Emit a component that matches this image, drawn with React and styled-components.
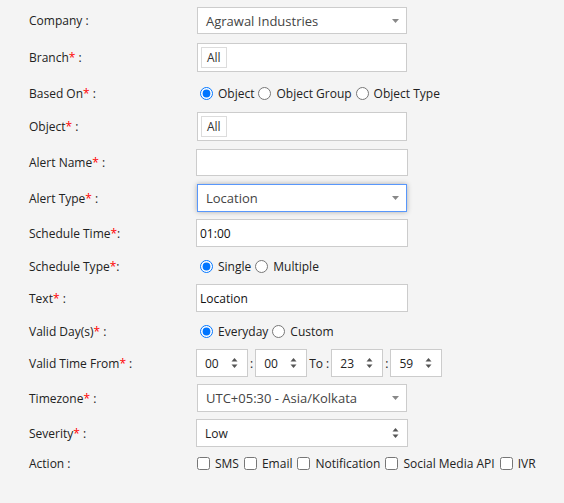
import React from 'react';
import styled, { createGlobalStyle } from 'styled-components';

const Global = createGlobalStyle`
  html, body { margin: 0; padding: 0; background: #f4f4f4; }
  body {
    font-family: "Open Sans", "Noto Sans", sans-serif;
    font-size: 12px;
    color: #222;
  }
  * { box-sizing: border-box; }
`;

const Form = styled.div`
  display: flex;
  flex-direction: column;
  padding: 7px 0 40px 29px;
  background: #f4f4f4;
`;

const Row = styled.div`
  display: flex;
  align-items: center;
  height: ${p => p.$h}px;
  margin-top: ${p => p.$mt || 0}px;
`;

const Label = styled.div`
  width: 167px;
  flex-shrink: 0;
  font-size: 12px;
  color: #222;
  white-space: nowrap;
`;

const Req = styled.span`
  color: #ff0000;
`;

const Chosen = styled.div`
  position: relative;
  margin-left: 1px;
  width: 210px;
  height: 100%;
  display: flex;
  align-items: center;
  padding-left: 8px;
  background: #fff;
  border: 1px solid ${p => (p.$focus ? '#5897fb' : '#cccccc')};
  box-shadow: ${p => (p.$focus ? '0 0 5px rgba(0,0,0,0.3)' : 'none')};
  color: #444;
  font-size: 13px;
`;

const ArrowWrap = styled.span`
  position: absolute;
  right: ${p => p.$r}px;
  top: 50%;
  transform: translateY(-50%);
  display: flex;
`;

const ChosenMulti = styled.div`
  margin-left: 1px;
  width: 210px;
  height: 100%;
  display: flex;
  align-items: flex-start;
  padding: 3px 0 0 3px;
  background: #fff;
  border: 1px solid #cccccc;
`;

const Tag = styled.span`
  display: inline-flex;
  align-items: center;
  height: 21px;
  padding: 0 5px;
  border: 1px solid #dcdcdc;
  background: #fff;
  color: #333;
  font-size: 12px;
`;

const TextInput = styled.input`
  width: 212px;
  height: 100%;
  border: 1px solid #cccccc;
  background: #fff;
  padding: 0 3px;
  font-family: "Open Sans", "Noto Sans", sans-serif;
  font-size: 12px;
  color: #111;
  outline: none;
`;

const NativeSelect = styled.div`
  position: relative;
  width: ${p => p.$w}px;
  height: 100%;
  display: flex;
  align-items: center;
  padding-left: 8px;
  background: #fff;
  border: 1px solid #cccccc;
  color: #222;
  font-size: 12px;
  flex-shrink: 0;
`;

const Options = styled.div`
  display: flex;
  align-items: center;
  margin-left: ${p => p.$ml || 0}px;
`;

const OptionLabel = styled.label`
  display: inline-flex;
  align-items: center;
  color: #222;
  font-size: 12px;
  margin-right: ${p => p.$mr || 0}px;
`;

const Radio = styled.input.attrs({ type: 'radio' })`
  width: 13px;
  height: 13px;
  margin: 0 5px 0 4px;
`;

const Check = styled.input.attrs({ type: 'checkbox' })`
  width: 13px;
  height: 13px;
  margin: 0 5px 0 0;
`;

const Sep = styled.span`
  margin: 0 2px;
  color: #222;
  font-size: 12px;
`;

const Caret = () => (
  <svg width="7" height="4" viewBox="0 0 7 4">
    <path d="M0 0 H7 L3.5 4 Z" fill="#888" />
  </svg>
);

const UpDown = () => (
  <svg width="7" height="11" viewBox="0 0 7 11">
    <path d="M0.5 4 L3.5 0.5 L6.5 4 Z" fill="#555" />
    <path d="M0.5 7 L3.5 10.5 L6.5 7 Z" fill="#555" />
  </svg>
);

const ChosenSelect = ({ value, focus }) => (
  <Chosen $focus={focus}>
    {value}
    <ArrowWrap $r={7}>
      <Caret />
    </ArrowWrap>
  </Chosen>
);

const Spinner = ({ value, w = 52, r = 9 }) => (
  <NativeSelect $w={w}>
    {value}
    <ArrowWrap $r={r}>
      <UpDown />
    </ArrowWrap>
  </NativeSelect>
);

const RadioGroup = ({ name, options }) => (
  <Options>
    {options.map((o, i) => (
      <OptionLabel key={o}>
        <Radio name={name} defaultChecked={i === 0} />
        {o}
      </OptionLabel>
    ))}
  </Options>
);

const L = ({ text, req, tight }) => (
  <Label>
    {text}
    {req && <Req>*</Req>}
    {tight ? ':' : ' :'}
  </Label>
);

export default function App() {
  return (
    <>
      <Global />
      <Form>
        <Row $h={27}>
          <L text="Company" />
          <ChosenSelect value="Agrawal Industries" />
        </Row>
        <Row $h={29} $mt={9}>
          <L text="Branch" req />
          <ChosenMulti>
            <Tag>All</Tag>
          </ChosenMulti>
        </Row>
        <Row $h={20} $mt={11}>
          <L text="Based On" req />
          <RadioGroup name="based" options={['Object', 'Object Group', 'Object Type']} />
        </Row>
        <Row $h={29} $mt={9}>
          <L text="Object" req />
          <ChosenMulti>
            <Tag>All</Tag>
          </ChosenMulti>
        </Row>
        <Row $h={27} $mt={8}>
          <L text="Alert Name" req />
          <TextInput defaultValue="" />
        </Row>
        <Row $h={28} $mt={8}>
          <L text="Alert Type" req />
          <ChosenSelect value="Location" focus />
        </Row>
        <Row $h={28} $mt={7}>
          <L text="Schedule Time" req tight />
          <TextInput defaultValue="01:00" />
        </Row>
        <Row $h={20} $mt={9}>
          <L text="Schedule Type" req tight />
          <RadioGroup name="stype" options={['Single', 'Multiple']} />
        </Row>
        <Row $h={28} $mt={8}>
          <L text="Text" req />
          <TextInput defaultValue="Location" />
        </Row>
        <Row $h={20} $mt={9}>
          <L text="Valid Day(s)" req />
          <RadioGroup name="vday" options={['Everyday', 'Custom']} />
        </Row>
        <Row $h={28} $mt={8}>
          <L text="Valid Time From" req />
          <Spinner value="00" />
          <Sep>:</Sep>
          <Spinner value="00" />
          <Sep>To :</Sep>
          <Spinner value="23" />
          <Sep>:</Sep>
          <Spinner value="59" />
        </Row>
        <Row $h={28} $mt={7}>
          <L text="Timezone" req />
          <ChosenSelect value="UTC+05:30 - Asia/Kolkata" />
        </Row>
        <Row $h={28} $mt={7}>
          <L text="Severity" req />
          <Spinner value="Low" w={212} r={8} />
        </Row>
        <Row $h={16} $mt={8}>
          <L text="Action" />
          <Options $ml={1}>
            {['SMS', 'Email', 'Notification', 'Social Media API', 'IVR'].map(o => (
              <OptionLabel key={o} $mr={5}>
                <Check />
                {o}
              </OptionLabel>
            ))}
          </Options>
        </Row>
      </Form>
    </>
  );
}
